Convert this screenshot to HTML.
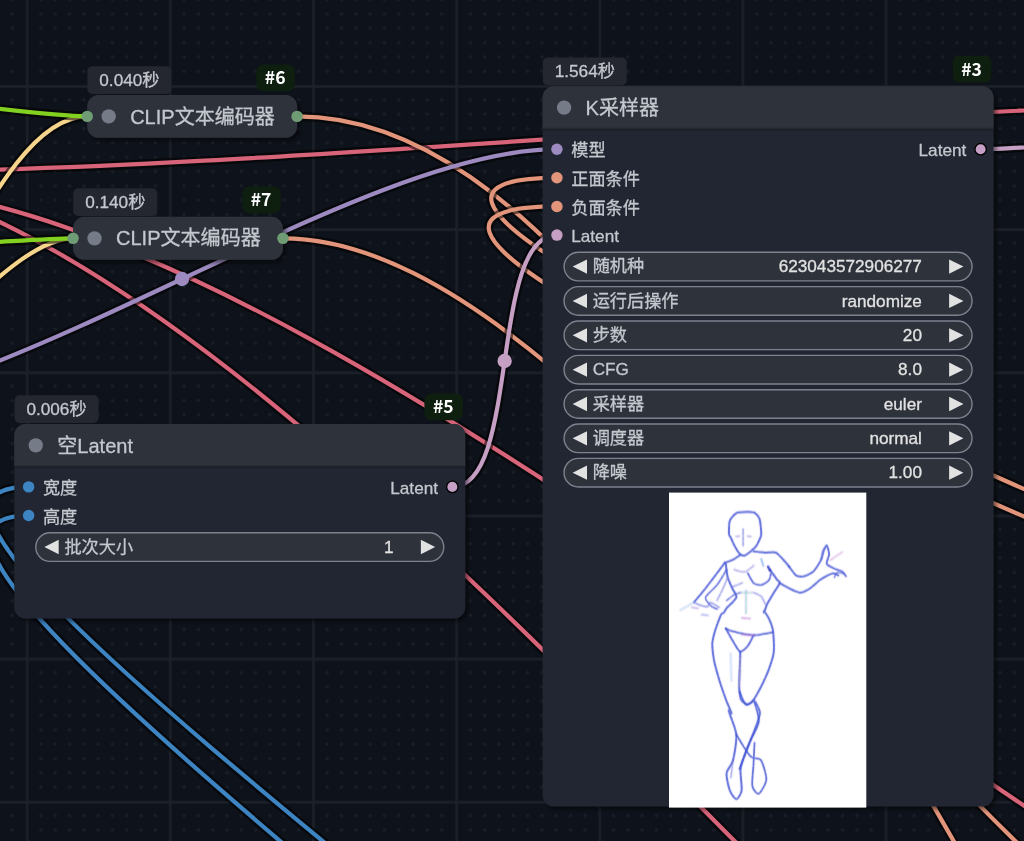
<!DOCTYPE html><html><head><meta charset="utf-8"><title>ComfyUI</title><style>html,body{margin:0;padding:0;background:#0e121a;overflow:hidden}svg{display:block;will-change:transform}text{font-family:'Liberation Sans','Noto Sans CJK SC',sans-serif;font-weight:400;paint-order:stroke;stroke-width:.3px;stroke-linejoin:round}</style></head><body>
<svg width="1024" height="841" viewBox="0 0 1024 841">
<defs>
<pattern id="grid" width="143.15" height="143.15" patternUnits="userSpaceOnUse" patternTransform="translate(25.8 85)">
<rect width="143.15" height="143.15" fill="#0e121a"/>
<circle cx="15.12" cy="14.91" r="1.7" fill="#1a1e27"/>
<circle cx="15.12" cy="29.23" r="1.7" fill="#1a1e27"/>
<circle cx="15.12" cy="43.55" r="1.7" fill="#1a1e27"/>
<circle cx="15.12" cy="57.86" r="1.7" fill="#1a1e27"/>
<circle cx="15.12" cy="72.17" r="1.7" fill="#1a1e27"/>
<circle cx="15.12" cy="86.49" r="1.7" fill="#1a1e27"/>
<circle cx="15.12" cy="100.8" r="1.7" fill="#1a1e27"/>
<circle cx="15.12" cy="115.12" r="1.7" fill="#1a1e27"/>
<circle cx="15.12" cy="129.44" r="1.7" fill="#1a1e27"/>
<circle cx="29.43" cy="14.91" r="1.7" fill="#1a1e27"/>
<circle cx="29.43" cy="29.23" r="1.7" fill="#1a1e27"/>
<circle cx="29.43" cy="43.55" r="1.7" fill="#1a1e27"/>
<circle cx="29.43" cy="57.86" r="1.7" fill="#1a1e27"/>
<circle cx="29.43" cy="72.17" r="1.7" fill="#1a1e27"/>
<circle cx="29.43" cy="86.49" r="1.7" fill="#1a1e27"/>
<circle cx="29.43" cy="100.8" r="1.7" fill="#1a1e27"/>
<circle cx="29.43" cy="115.12" r="1.7" fill="#1a1e27"/>
<circle cx="29.43" cy="129.44" r="1.7" fill="#1a1e27"/>
<circle cx="43.74" cy="14.91" r="1.7" fill="#1a1e27"/>
<circle cx="43.74" cy="29.23" r="1.7" fill="#1a1e27"/>
<circle cx="43.74" cy="43.55" r="1.7" fill="#1a1e27"/>
<circle cx="43.74" cy="57.86" r="1.7" fill="#1a1e27"/>
<circle cx="43.74" cy="72.17" r="1.7" fill="#1a1e27"/>
<circle cx="43.74" cy="86.49" r="1.7" fill="#1a1e27"/>
<circle cx="43.74" cy="100.8" r="1.7" fill="#1a1e27"/>
<circle cx="43.74" cy="115.12" r="1.7" fill="#1a1e27"/>
<circle cx="43.74" cy="129.44" r="1.7" fill="#1a1e27"/>
<circle cx="58.06" cy="14.91" r="1.7" fill="#1a1e27"/>
<circle cx="58.06" cy="29.23" r="1.7" fill="#1a1e27"/>
<circle cx="58.06" cy="43.55" r="1.7" fill="#1a1e27"/>
<circle cx="58.06" cy="57.86" r="1.7" fill="#1a1e27"/>
<circle cx="58.06" cy="72.17" r="1.7" fill="#1a1e27"/>
<circle cx="58.06" cy="86.49" r="1.7" fill="#1a1e27"/>
<circle cx="58.06" cy="100.8" r="1.7" fill="#1a1e27"/>
<circle cx="58.06" cy="115.12" r="1.7" fill="#1a1e27"/>
<circle cx="58.06" cy="129.44" r="1.7" fill="#1a1e27"/>
<circle cx="72.38" cy="14.91" r="1.7" fill="#1a1e27"/>
<circle cx="72.38" cy="29.23" r="1.7" fill="#1a1e27"/>
<circle cx="72.38" cy="43.55" r="1.7" fill="#1a1e27"/>
<circle cx="72.38" cy="57.86" r="1.7" fill="#1a1e27"/>
<circle cx="72.38" cy="72.17" r="1.7" fill="#1a1e27"/>
<circle cx="72.38" cy="86.49" r="1.7" fill="#1a1e27"/>
<circle cx="72.38" cy="100.8" r="1.7" fill="#1a1e27"/>
<circle cx="72.38" cy="115.12" r="1.7" fill="#1a1e27"/>
<circle cx="72.38" cy="129.44" r="1.7" fill="#1a1e27"/>
<circle cx="86.69" cy="14.91" r="1.7" fill="#1a1e27"/>
<circle cx="86.69" cy="29.23" r="1.7" fill="#1a1e27"/>
<circle cx="86.69" cy="43.55" r="1.7" fill="#1a1e27"/>
<circle cx="86.69" cy="57.86" r="1.7" fill="#1a1e27"/>
<circle cx="86.69" cy="72.17" r="1.7" fill="#1a1e27"/>
<circle cx="86.69" cy="86.49" r="1.7" fill="#1a1e27"/>
<circle cx="86.69" cy="100.8" r="1.7" fill="#1a1e27"/>
<circle cx="86.69" cy="115.12" r="1.7" fill="#1a1e27"/>
<circle cx="86.69" cy="129.44" r="1.7" fill="#1a1e27"/>
<circle cx="101" cy="14.91" r="1.7" fill="#1a1e27"/>
<circle cx="101" cy="29.23" r="1.7" fill="#1a1e27"/>
<circle cx="101" cy="43.55" r="1.7" fill="#1a1e27"/>
<circle cx="101" cy="57.86" r="1.7" fill="#1a1e27"/>
<circle cx="101" cy="72.17" r="1.7" fill="#1a1e27"/>
<circle cx="101" cy="86.49" r="1.7" fill="#1a1e27"/>
<circle cx="101" cy="100.8" r="1.7" fill="#1a1e27"/>
<circle cx="101" cy="115.12" r="1.7" fill="#1a1e27"/>
<circle cx="101" cy="129.44" r="1.7" fill="#1a1e27"/>
<circle cx="115.32" cy="14.91" r="1.7" fill="#1a1e27"/>
<circle cx="115.32" cy="29.23" r="1.7" fill="#1a1e27"/>
<circle cx="115.32" cy="43.55" r="1.7" fill="#1a1e27"/>
<circle cx="115.32" cy="57.86" r="1.7" fill="#1a1e27"/>
<circle cx="115.32" cy="72.17" r="1.7" fill="#1a1e27"/>
<circle cx="115.32" cy="86.49" r="1.7" fill="#1a1e27"/>
<circle cx="115.32" cy="100.8" r="1.7" fill="#1a1e27"/>
<circle cx="115.32" cy="115.12" r="1.7" fill="#1a1e27"/>
<circle cx="115.32" cy="129.44" r="1.7" fill="#1a1e27"/>
<circle cx="129.64" cy="14.91" r="1.7" fill="#1a1e27"/>
<circle cx="129.64" cy="29.23" r="1.7" fill="#1a1e27"/>
<circle cx="129.64" cy="43.55" r="1.7" fill="#1a1e27"/>
<circle cx="129.64" cy="57.86" r="1.7" fill="#1a1e27"/>
<circle cx="129.64" cy="72.17" r="1.7" fill="#1a1e27"/>
<circle cx="129.64" cy="86.49" r="1.7" fill="#1a1e27"/>
<circle cx="129.64" cy="100.8" r="1.7" fill="#1a1e27"/>
<circle cx="129.64" cy="115.12" r="1.7" fill="#1a1e27"/>
<circle cx="129.64" cy="129.44" r="1.7" fill="#1a1e27"/>
<rect x="0.2" y="0" width="2.4" height="143.15" fill="#1c2029"/><rect x="0" y="0.2" width="143.15" height="2.6" fill="#1c2029"/>
</pattern>
<filter id="sh" x="-10%" y="-10%" width="120%" height="125%"><feDropShadow dx="2.9" dy="2.9" stdDeviation="2.2" flood-color="#000" flood-opacity="0.5"/></filter>
<filter id="blur"><feGaussianBlur stdDeviation="0.75"/></filter>
</defs>
<rect width="1024" height="841" fill="url(#grid)"/>
<path d="M-97.5 171.1C235.89 171.1 901.01 104.7 1234.4 104.7" fill="none" stroke="rgba(0,0,0,0.55)" stroke-width="9.16"/>
<path d="M-97.5 171.1C235.89 171.1 901.01 104.7 1234.4 104.7" fill="none" stroke="#d8647a" stroke-width="4.22"/>
<path d="M-158.1 184.3C399.32 184.3 1281.38 1176.2 1838.8 1176.2" fill="none" stroke="rgba(0,0,0,0.55)" stroke-width="9.16"/>
<path d="M-158.1 184.3C399.32 184.3 1281.38 1176.2 1838.8 1176.2" fill="none" stroke="#d8647a" stroke-width="4.22"/>
<path d="M-234.2 160.8C352.22 160.8 1101.38 1505.5 1687.8 1505.5" fill="none" stroke="rgba(0,0,0,0.55)" stroke-width="9.16"/>
<path d="M-234.2 160.8C352.22 160.8 1101.38 1505.5 1687.8 1505.5" fill="none" stroke="#d8647a" stroke-width="4.22"/>
<path d="M751 1306C1024.04 1306 -244.42 486.89 28.62 486.89" fill="none" stroke="rgba(0,0,0,0.55)" stroke-width="9.16"/>
<path d="M751 1306C1024.04 1306 -244.42 486.89 28.62 486.89" fill="none" stroke="#3d84c2" stroke-width="4.22"/>
<path d="M723.7 1329.8C991.35 1329.8 -239.04 515.52 28.62 515.52" fill="none" stroke="rgba(0,0,0,0.55)" stroke-width="9.16"/>
<path d="M723.7 1329.8C991.35 1329.8 -239.04 515.52 28.62 515.52" fill="none" stroke="#3d84c2" stroke-width="4.22"/>
<path d="M-184.6 421.1C-82.52 421.1 -14.88 116.38 87.2 116.38" fill="none" stroke="rgba(0,0,0,0.55)" stroke-width="9.16"/>
<path d="M-184.6 421.1C-82.52 421.1 -14.88 116.38 87.2 116.38" fill="none" stroke="#f5d48b" stroke-width="4.22"/>
<path d="M-101.7 99.9C-54.3 99.9 39.8 116.38 87.2 116.38" fill="none" stroke="rgba(0,0,0,0.55)" stroke-width="9.16"/>
<path d="M-101.7 99.9C-54.3 99.9 39.8 116.38 87.2 116.38" fill="none" stroke="#82d01f" stroke-width="4.22"/>
<path d="M-142.9 374.7C-79.05 374.7 9.2 238.33 73.05 238.33" fill="none" stroke="rgba(0,0,0,0.55)" stroke-width="9.16"/>
<path d="M-142.9 374.7C-79.05 374.7 9.2 238.33 73.05 238.33" fill="none" stroke="#f5d48b" stroke-width="4.22"/>
<path d="M-50.4 244.1C-19.5 244.1 42.15 238.33 73.05 238.33" fill="none" stroke="rgba(0,0,0,0.55)" stroke-width="9.16"/>
<path d="M-50.4 244.1C-19.5 244.1 42.15 238.33 73.05 238.33" fill="none" stroke="#82d01f" stroke-width="4.22"/>
<path d="M297.1 116.38C775.51 116.38 1110.29 1528.4 1588.7 1528.4" fill="none" stroke="rgba(0,0,0,0.55)" stroke-width="9.16"/>
<path d="M297.1 116.38C775.51 116.38 1110.29 1528.4 1588.7 1528.4" fill="none" stroke="#e2957a" stroke-width="4.22"/>
<path d="M282.95 238.33C624.42 238.33 1036.03 1055.4 1377.5 1055.4" fill="none" stroke="rgba(0,0,0,0.55)" stroke-width="9.16"/>
<path d="M282.95 238.33C624.42 238.33 1036.03 1055.4 1377.5 1055.4" fill="none" stroke="#e2957a" stroke-width="4.22"/>
<path d="M-192.92 408.81C5.46 408.81 358.54 149.19 556.92 149.19" fill="none" stroke="rgba(0,0,0,0.55)" stroke-width="9.16"/>
<path d="M-192.92 408.81C5.46 408.81 358.54 149.19 556.92 149.19" fill="none" stroke="#9c8ac0" stroke-width="4.22"/>
<circle cx="182" cy="279" r="7.16" fill="#9c8ac0"/>
<path d="M2446.3 1211.6C2984.73 1211.6 18.49 177.82 556.92 177.82" fill="none" stroke="rgba(0,0,0,0.55)" stroke-width="9.16"/>
<path d="M2446.3 1211.6C2984.73 1211.6 18.49 177.82 556.92 177.82" fill="none" stroke="#e2957a" stroke-width="4.22"/>
<path d="M2532 1267.8C3092.55 1267.8 -3.63 206.45 556.92 206.45" fill="none" stroke="rgba(0,0,0,0.55)" stroke-width="9.16"/>
<path d="M2532 1267.8C3092.55 1267.8 -3.63 206.45 556.92 206.45" fill="none" stroke="#e2957a" stroke-width="4.22"/>
<path d="M452.34 486.89C520.5 486.89 488.75 235.08 556.92 235.08" fill="none" stroke="rgba(0,0,0,0.55)" stroke-width="9.16"/>
<path d="M452.34 486.89C520.5 486.89 488.75 235.08 556.92 235.08" fill="none" stroke="#c69fc4" stroke-width="4.22"/>
<circle cx="504.63" cy="360.99" r="7.16" fill="#c69fc4"/>
<path d="M980.64 149.19C1048.15 149.19 1182.49 130 1250 130" fill="none" stroke="rgba(0,0,0,0.55)" stroke-width="9.16"/>
<path d="M980.64 149.19C1048.15 149.19 1182.49 130 1250 130" fill="none" stroke="#c69fc4" stroke-width="4.22"/>
<g filter="url(#sh)">
<path d="M98.65 94.91H285.65A11.45 11.45 0 0 1 297.1 106.36V126.4A11.45 11.45 0 0 1 285.65 137.85H98.65A11.45 11.45 0 0 1 87.2 126.4V106.36A11.45 11.45 0 0 1 98.65 94.91Z" fill="#2e323b"/>
</g>
<circle cx="108.67" cy="116.38" r="7.16" fill="#757b87"/>
<text x="130.15" y="123.53" font-size="20.04" fill="#c4c8ce" stroke="#c4c8ce">CLIP文本编码器</text>
<circle cx="87.2" cy="116.38" r="5.73" fill="#6f9c75"/>
<circle cx="297.1" cy="116.38" r="5.73" fill="#6f9c75"/>
<path d="M92.4 66.28H166.4A5 5 0 0 1 171.4 71.28V89.01A5 5 0 0 1 166.4 94.01H92.4A5 5 0 0 1 87.4 89.01V71.28A5 5 0 0 1 92.4 66.28Z" fill="#242730"/>
<text x="129.4" y="86.08" font-size="17.18" fill="#c4c8ce" stroke="#c4c8ce" text-anchor="middle">0.040秒</text>
<path d="M263.3 64.5H287.9A7 7 0 0 1 294.9 71.5V84.3A7 7 0 0 1 287.9 91.3H263.3A7 7 0 0 1 256.3 84.3V71.5A7 7 0 0 1 263.3 64.5Z" fill="#0f1f0f"/>
<text x="275.2" y="84.3" font-size="17.6" fill="#fff" text-anchor="middle" style="font-weight:700;font-family:'Noto Sans CJK SC','Liberation Sans',sans-serif">#6</text>
<g filter="url(#sh)">
<path d="M84.5 216.86H271.5A11.45 11.45 0 0 1 282.95 228.31V248.35A11.45 11.45 0 0 1 271.5 259.8H84.5A11.45 11.45 0 0 1 73.05 248.35V228.31A11.45 11.45 0 0 1 84.5 216.86Z" fill="#2e323b"/>
</g>
<circle cx="94.52" cy="238.33" r="7.16" fill="#757b87"/>
<text x="116" y="245.49" font-size="20.04" fill="#c4c8ce" stroke="#c4c8ce">CLIP文本编码器</text>
<circle cx="73.05" cy="238.33" r="5.73" fill="#6f9c75"/>
<circle cx="282.95" cy="238.33" r="5.73" fill="#6f9c75"/>
<path d="M78.25 188.23H152.25A5 5 0 0 1 157.25 193.23V210.96A5 5 0 0 1 152.25 215.96H78.25A5 5 0 0 1 73.25 210.96V193.23A5 5 0 0 1 78.25 188.23Z" fill="#242730"/>
<text x="115.25" y="208.03" font-size="17.18" fill="#c4c8ce" stroke="#c4c8ce" text-anchor="middle">0.140秒</text>
<path d="M249.15 186.46H273.75A7 7 0 0 1 280.75 193.46V206.26A7 7 0 0 1 273.75 213.26H249.15A7 7 0 0 1 242.15 206.26V193.46A7 7 0 0 1 249.15 186.46Z" fill="#0f1f0f"/>
<text x="261.05" y="206.26" font-size="17.6" fill="#fff" text-anchor="middle" style="font-weight:700;font-family:'Noto Sans CJK SC','Liberation Sans',sans-serif">#7</text>
<g filter="url(#sh)">
<path d="M25.75 423.91H453.77A11.45 11.45 0 0 1 465.22 435.36V607.14A11.45 11.45 0 0 1 453.77 618.59H25.75A11.45 11.45 0 0 1 14.3 607.14V435.36A11.45 11.45 0 0 1 25.75 423.91Z" fill="#242730"/>
</g>
<path d="M25.75 423.91H453.77A11.45 11.45 0 0 1 465.22 435.36V466.85H14.3V435.36A11.45 11.45 0 0 1 25.75 423.91Z" fill="#2e323b"/>
<rect x="14.3" y="465.42" width="450.92" height="2.86" fill="rgba(0,0,0,0.2)"/>
<circle cx="35.77" cy="445.38" r="7.16" fill="#757b87"/>
<text x="57.25" y="452.54" font-size="20.04" fill="#c4c8ce" stroke="#c4c8ce">空Latent</text>
<path d="M19.5 395.28H93.5A5 5 0 0 1 98.5 400.28V418.01A5 5 0 0 1 93.5 423.01H19.5A5 5 0 0 1 14.5 418.01V400.28A5 5 0 0 1 19.5 395.28Z" fill="#242730"/>
<text x="56.5" y="415.08" font-size="17.18" fill="#c4c8ce" stroke="#c4c8ce" text-anchor="middle">0.006秒</text>
<path d="M431.42 393.51H456.02A7 7 0 0 1 463.02 400.51V413.31A7 7 0 0 1 456.02 420.31H431.42A7 7 0 0 1 424.42 413.31V400.51A7 7 0 0 1 431.42 393.51Z" fill="#0f1f0f"/>
<text x="443.32" y="413.31" font-size="17.6" fill="#fff" text-anchor="middle" style="font-weight:700;font-family:'Noto Sans CJK SC','Liberation Sans',sans-serif">#5</text>
<circle cx="28.62" cy="486.89" r="5.73" fill="#3d84c2"/>
<text x="42.93" y="494.05" font-size="17.18" fill="#c4c8ce" stroke="#c4c8ce">宽度</text>
<circle cx="28.62" cy="515.52" r="5.73" fill="#3d84c2"/>
<text x="42.93" y="522.68" font-size="17.18" fill="#c4c8ce" stroke="#c4c8ce">高度</text>
<circle cx="452.34" cy="486.89" r="5.73" fill="#c69fc4" stroke="#000" stroke-width="1.4"/>
<text x="438.02" y="494.05" font-size="17.18" fill="#c4c8ce" stroke="#c4c8ce" text-anchor="end">Latent</text>
<rect x="35.77" y="532.7" width="407.98" height="28.63" rx="14.31" fill="#2e323b" stroke="#7c838e" stroke-width="1.4"/>
<path d="M58.68 539.86L44.36 547.01L58.68 554.17Z" fill="#e2e2e2"/>
<path d="M420.85 539.86L435.16 547.01L420.85 554.17Z" fill="#e2e2e2"/>
<text x="64.4" y="552.74" font-size="17.18" fill="#c4c8ce" stroke="#c4c8ce">批次大小</text>
<text x="393.65" y="552.74" font-size="17.18" fill="#e2e2e2" stroke="#e2e2e2" text-anchor="end">1</text>
<g filter="url(#sh)">
<path d="M554.05 86.21H982.07A11.45 11.45 0 0 1 993.52 97.66V795.1A11.45 11.45 0 0 1 982.07 806.55H554.05A11.45 11.45 0 0 1 542.6 795.1V97.66A11.45 11.45 0 0 1 554.05 86.21Z" fill="#242730"/>
</g>
<path d="M554.05 86.21H982.07A11.45 11.45 0 0 1 993.52 97.66V129.15H542.6V97.66A11.45 11.45 0 0 1 554.05 86.21Z" fill="#2e323b"/>
<rect x="542.6" y="127.72" width="450.92" height="2.86" fill="rgba(0,0,0,0.2)"/>
<circle cx="564.07" cy="107.68" r="7.16" fill="#757b87"/>
<text x="585.55" y="114.84" font-size="20.04" fill="#c4c8ce" stroke="#c4c8ce">K采样器</text>
<path d="M547.8 57.58H621.8A5 5 0 0 1 626.8 62.58V80.31A5 5 0 0 1 621.8 85.31H547.8A5 5 0 0 1 542.8 80.31V62.58A5 5 0 0 1 547.8 57.58Z" fill="#242730"/>
<text x="584.8" y="77.38" font-size="17.18" fill="#c4c8ce" stroke="#c4c8ce" text-anchor="middle">1.564秒</text>
<path d="M959.72 55.81H984.32A7 7 0 0 1 991.32 62.81V75.61A7 7 0 0 1 984.32 82.61H959.72A7 7 0 0 1 952.72 75.61V62.81A7 7 0 0 1 959.72 55.81Z" fill="#0f1f0f"/>
<text x="971.62" y="75.61" font-size="17.6" fill="#fff" text-anchor="middle" style="font-weight:700;font-family:'Noto Sans CJK SC','Liberation Sans',sans-serif">#3</text>
<circle cx="556.92" cy="149.19" r="5.73" fill="#9c8ac0"/>
<text x="571.23" y="156.35" font-size="17.18" fill="#c4c8ce" stroke="#c4c8ce">模型</text>
<circle cx="556.92" cy="177.82" r="5.73" fill="#e2957a"/>
<text x="571.23" y="184.98" font-size="17.18" fill="#c4c8ce" stroke="#c4c8ce">正面条件</text>
<circle cx="556.92" cy="206.45" r="5.73" fill="#e2957a"/>
<text x="571.23" y="213.61" font-size="17.18" fill="#c4c8ce" stroke="#c4c8ce">负面条件</text>
<circle cx="556.92" cy="235.08" r="5.73" fill="#c69fc4"/>
<text x="571.23" y="242.24" font-size="17.18" fill="#c4c8ce" stroke="#c4c8ce">Latent</text>
<circle cx="980.64" cy="149.19" r="5.73" fill="#c69fc4" stroke="#000" stroke-width="1.4"/>
<text x="966.32" y="156.35" font-size="17.18" fill="#c4c8ce" stroke="#c4c8ce" text-anchor="end">Latent</text>
<rect x="564.07" y="252.26" width="407.98" height="28.63" rx="14.31" fill="#2e323b" stroke="#7c838e" stroke-width="1.4"/>
<path d="M586.98 259.42L572.66 266.57L586.98 273.73Z" fill="#e2e2e2"/>
<path d="M949.15 259.42L963.46 266.57L949.15 273.73Z" fill="#e2e2e2"/>
<text x="592.7" y="272.3" font-size="17.18" fill="#c4c8ce" stroke="#c4c8ce">随机种</text>
<text x="921.95" y="272.3" font-size="17.18" fill="#e2e2e2" stroke="#e2e2e2" text-anchor="end">623043572906277</text>
<rect x="564.07" y="286.62" width="407.98" height="28.63" rx="14.31" fill="#2e323b" stroke="#7c838e" stroke-width="1.4"/>
<path d="M586.98 293.77L572.66 300.93L586.98 308.09Z" fill="#e2e2e2"/>
<path d="M949.15 293.77L963.46 300.93L949.15 308.09Z" fill="#e2e2e2"/>
<text x="592.7" y="306.66" font-size="17.18" fill="#c4c8ce" stroke="#c4c8ce">运行后操作</text>
<text x="921.95" y="306.66" font-size="17.18" fill="#e2e2e2" stroke="#e2e2e2" text-anchor="end">randomize</text>
<rect x="564.07" y="320.97" width="407.98" height="28.63" rx="14.31" fill="#2e323b" stroke="#7c838e" stroke-width="1.4"/>
<path d="M586.98 328.13L572.66 335.29L586.98 342.44Z" fill="#e2e2e2"/>
<path d="M949.15 328.13L963.46 335.29L949.15 342.44Z" fill="#e2e2e2"/>
<text x="592.7" y="341.01" font-size="17.18" fill="#c4c8ce" stroke="#c4c8ce">步数</text>
<text x="921.95" y="341.01" font-size="17.18" fill="#e2e2e2" stroke="#e2e2e2" text-anchor="end">20</text>
<rect x="564.07" y="355.33" width="407.98" height="28.63" rx="14.31" fill="#2e323b" stroke="#7c838e" stroke-width="1.4"/>
<path d="M586.98 362.48L572.66 369.64L586.98 376.8Z" fill="#e2e2e2"/>
<path d="M949.15 362.48L963.46 369.64L949.15 376.8Z" fill="#e2e2e2"/>
<text x="592.7" y="375.37" font-size="17.18" fill="#c4c8ce" stroke="#c4c8ce">CFG</text>
<text x="921.95" y="375.37" font-size="17.18" fill="#e2e2e2" stroke="#e2e2e2" text-anchor="end">8.0</text>
<rect x="564.07" y="389.68" width="407.98" height="28.63" rx="14.31" fill="#2e323b" stroke="#7c838e" stroke-width="1.4"/>
<path d="M586.98 396.84L572.66 404L586.98 411.16Z" fill="#e2e2e2"/>
<path d="M949.15 396.84L963.46 404L949.15 411.16Z" fill="#e2e2e2"/>
<text x="592.7" y="409.72" font-size="17.18" fill="#c4c8ce" stroke="#c4c8ce">采样器</text>
<text x="921.95" y="409.72" font-size="17.18" fill="#e2e2e2" stroke="#e2e2e2" text-anchor="end">euler</text>
<rect x="564.07" y="424.04" width="407.98" height="28.63" rx="14.31" fill="#2e323b" stroke="#7c838e" stroke-width="1.4"/>
<path d="M586.98 431.2L572.66 438.35L586.98 445.51Z" fill="#e2e2e2"/>
<path d="M949.15 431.2L963.46 438.35L949.15 445.51Z" fill="#e2e2e2"/>
<text x="592.7" y="444.08" font-size="17.18" fill="#c4c8ce" stroke="#c4c8ce">调度器</text>
<text x="921.95" y="444.08" font-size="17.18" fill="#e2e2e2" stroke="#e2e2e2" text-anchor="end">normal</text>
<rect x="564.07" y="458.39" width="407.98" height="28.63" rx="14.31" fill="#2e323b" stroke="#7c838e" stroke-width="1.4"/>
<path d="M586.98 465.55L572.66 472.71L586.98 479.87Z" fill="#e2e2e2"/>
<path d="M949.15 465.55L963.46 472.71L949.15 479.87Z" fill="#e2e2e2"/>
<text x="592.7" y="478.44" font-size="17.18" fill="#c4c8ce" stroke="#c4c8ce">降噪</text>
<text x="921.95" y="478.44" font-size="17.18" fill="#e2e2e2" stroke="#e2e2e2" text-anchor="end">1.00</text>
<rect x="669" y="492.6" width="197.3" height="315" fill="#fff"/>
<g transform="translate(669.0 492.6)" fill="none" stroke-linecap="round" stroke-linejoin="round" filter="url(#blur)">
<path d="M69.3 19.8C71.8 19.4 82.0 19.0 84.6 19.8C87.3 20.6 89.5 23.9 90.4 26.0C91.3 28.1 91.8 34.4 92.0 36.6C92.2 38.7 92.5 41.2 92.0 43.3C91.4 45.3 88.8 51.0 87.5 52.9C86.3 54.8 83.3 57.4 81.8 58.7C80.2 60.0 76.5 62.9 75.0 63.1C73.6 63.3 71.4 61.9 70.2 60.6C69.0 59.3 66.4 54.8 65.4 52.9C64.4 51.0 62.6 46.7 61.9 45.2C61.3 43.8 60.2 43.4 60.0 41.4C59.9 39.3 60.0 31.1 60.6 28.9C61.2 26.6 63.4 24.2 64.4 23.1C65.5 22.0 66.7 20.2 69.3 19.8Z" stroke="#b9a8f0" stroke-width="4.1" opacity="0.2"/>
<path d="M74.1 36.6 74.1 52.9" stroke="#b9a8f0" stroke-width="3.5" opacity="0.2"/>
<path d="M67.3 43.9 70.2 43.5" stroke="#b9a8f0" stroke-width="3.4" opacity="0.2"/>
<path d="M78.9 43.5 81.8 43.9" stroke="#b9a8f0" stroke-width="3.4" opacity="0.2"/>
<path d="M84.6 58.7C86.1 58.8 93.4 59.9 96.2 60.0C99.0 60.2 104.4 59.0 106.8 60.0C109.2 61.1 113.7 66.5 115.4 68.3C117.1 70.1 119.6 73.3 120.2 74.1" stroke="#b9a8f0" stroke-width="4.0" opacity="0.2"/>
<path d="M71.2 62.5C70.2 63.1 65.4 66.4 63.5 67.3C61.6 68.3 56.8 69.9 55.8 70.2" stroke="#b9a8f0" stroke-width="3.9" opacity="0.2"/>
<path d="M55.8 70.2C54.3 72.1 46.9 82.1 44.2 85.6C41.6 89.1 37.0 95.1 34.6 98.1C32.2 101.1 26.2 108.2 25.0 109.7" stroke="#b9a8f0" stroke-width="3.9" opacity="0.2"/>
<path d="M57.7 77.0C56.5 78.9 50.7 88.9 48.1 92.3C45.5 95.8 37.3 102.2 36.6 104.8C35.8 107.5 40.9 112.1 42.3 113.5C43.8 114.9 47.4 116.0 48.1 116.4" stroke="#b9a8f0" stroke-width="3.7" opacity="0.2"/>
<path d="M25.0 109.7C25.7 110.0 29.1 112.0 30.8 112.5C32.5 113.1 37.2 114.2 38.5 113.9C39.8 113.6 39.9 109.8 41.4 109.9C42.8 110.0 48.9 114.1 50.0 114.7" stroke="#b9a8f0" stroke-width="3.6" opacity="0.2"/>
<path d="M23.1 114.7 28.9 115.7" stroke="#b9a8f0" stroke-width="3.4" opacity="0.2"/>
<path d="M32.7 122.0 39.4 122.8" stroke="#b9a8f0" stroke-width="3.4" opacity="0.2"/>
<path d="M11.5 117.4 25.0 109.7" stroke="#b9a8f0" stroke-width="3.4" opacity="0.2"/>
<path d="M56.8 71.2C57.0 72.9 57.8 81.5 58.7 84.6C59.5 87.8 62.4 93.7 63.5 96.2C64.6 98.7 68.1 102.4 67.3 104.8C66.6 107.3 59.3 113.5 57.7 115.4C56.2 117.3 55.6 119.2 54.8 120.0C54.1 120.9 53.0 120.2 51.9 122.4C50.9 124.6 47.3 134.2 46.2 137.8C45.1 141.4 43.4 147.4 43.3 151.2C43.2 155.1 44.2 163.8 45.2 168.6C46.2 173.4 49.4 184.7 51.0 189.7C52.5 194.8 56.3 205.1 57.7 209.0C59.2 212.8 62.3 219.3 62.5 220.5C62.8 221.7 59.2 215.6 59.8 218.3C60.3 221.0 66.7 235.8 67.3 241.9C67.8 248.1 65.3 262.9 64.0 267.7C62.8 272.5 58.0 276.8 57.6 280.6C57.2 284.4 59.6 294.6 60.8 297.8C62.0 301.0 65.8 306.4 67.3 306.4C68.7 306.4 72.1 301.6 72.6 297.8C73.2 294.0 71.0 281.1 71.6 276.3C72.1 271.5 75.2 264.0 76.9 259.1C78.7 254.3 83.8 242.5 85.5 237.6C87.3 232.8 90.8 223.9 90.9 220.4C91.0 217.0 87.1 211.0 86.6 209.7" stroke="#b9a8f0" stroke-width="4.0" opacity="0.2"/>
<path d="M57.7 107.7C58.7 107.0 63.7 102.9 65.4 102.0C67.1 101.0 70.5 100.3 71.2 100.0" stroke="#b9a8f0" stroke-width="3.6" opacity="0.2"/>
<path d="M58.7 84.6C58.1 86.1 55.2 93.3 53.9 96.2C52.5 99.1 48.8 106.3 48.1 107.7" stroke="#b9a8f0" stroke-width="3.5" opacity="0.2"/>
<path d="M101.0 77.0C101.8 78.2 106.5 84.9 107.7 86.6C108.9 88.3 111.0 88.7 110.6 90.4C110.3 92.1 106.4 97.4 104.8 100.0C103.3 102.7 99.3 109.1 98.1 111.6C96.9 114.1 95.6 119.2 95.2 120.0C94.9 120.9 94.6 117.8 95.2 118.5C95.8 119.3 99.0 123.8 100.0 126.2C101.1 128.6 103.3 133.7 103.9 137.8C104.5 141.9 105.3 154.1 104.8 158.9C104.4 163.8 101.6 171.9 100.0 176.3C98.5 180.6 94.3 189.7 92.3 193.6C90.4 197.4 86.3 204.8 84.6 207.0C83.0 209.3 80.4 211.8 78.9 211.8C77.3 211.8 73.2 209.3 72.1 207.0C71.1 204.8 70.3 198.9 70.2 193.6C70.1 188.3 71.1 169.0 71.2 164.7C71.3 160.4 71.2 159.7 71.2 158.9" stroke="#b9a8f0" stroke-width="4.0" opacity="0.2"/>
<path d="M120.2 74.1C121.1 75.1 125.2 81.5 127.0 82.7C128.8 83.9 132.5 84.2 134.7 83.7C136.8 83.2 142.1 80.9 144.3 78.9C146.5 76.8 150.7 70.0 152.0 67.3C153.3 64.7 154.1 59.5 154.9 57.7C155.6 55.9 157.1 52.4 157.8 52.9C158.4 53.4 160.1 59.3 160.1 61.6C160.1 63.8 157.1 69.4 157.8 71.2C158.4 73.0 163.5 75.0 165.4 76.0C167.4 77.0 171.7 77.9 173.1 78.9C174.6 79.8 176.5 83.1 177.0 83.7" stroke="#b9a8f0" stroke-width="3.9" opacity="0.2"/>
<path d="M110.6 90.4C111.7 91.0 116.8 94.0 119.3 95.2C121.8 96.4 128.2 99.9 130.8 100.0C133.5 100.2 137.8 97.9 140.4 96.2C143.1 94.5 149.1 88.5 152.0 86.6C154.9 84.6 161.4 81.3 163.5 80.8C165.7 80.3 168.6 82.5 169.3 82.7" stroke="#b9a8f0" stroke-width="3.9" opacity="0.2"/>
<path d="M152.0 67.3C152.2 66.1 153.3 59.3 153.9 57.7C154.5 56.2 156.4 55.2 156.8 54.8" stroke="#b9a8f0" stroke-width="3.6" opacity="0.2"/>
<path d="M161.6 67.3 173.1 59.6" stroke="#b9a8f0" stroke-width="3.4" opacity="0.2"/>
<path d="M165.4 84.6C165.8 84.0 167.3 80.3 168.3 79.8C169.4 79.4 173.4 80.7 174.1 80.8" stroke="#b9a8f0" stroke-width="3.5" opacity="0.2"/>
<path d="M78.9 80.8C79.6 82.0 83.0 89.0 84.6 90.4C86.3 91.9 90.4 92.7 92.3 92.3C94.3 92.0 98.8 89.0 100.0 87.5C101.2 86.1 101.7 81.6 102.0 80.8" stroke="#b9a8f0" stroke-width="3.8" opacity="0.2"/>
<path d="M65.4 77.0C66.1 77.2 69.7 78.6 71.2 78.9C72.6 79.1 75.3 79.6 77.0 78.9C78.6 78.2 83.7 73.8 84.6 73.1" stroke="#b9a8f0" stroke-width="3.5" opacity="0.2"/>
<path d="M63.5 94.3 73.1 90.4" stroke="#b9a8f0" stroke-width="3.5" opacity="0.2"/>
<path d="M92.3 66.4 94.3 73.1" stroke="#b9a8f0" stroke-width="3.7" opacity="0.2"/>
<path d="M99.1 74.1 101.0 77.9" stroke="#b9a8f0" stroke-width="4.4" opacity="0.2"/>
<path d="M84.6 100.0C85.6 100.5 90.9 102.4 92.3 103.9C93.8 105.3 95.7 110.6 96.2 111.6" stroke="#b9a8f0" stroke-width="3.5" opacity="0.2"/>
<path d="M77.0 98.1C77.0 100.9 77.0 117.7 77.0 120.0C77.0 122.4 77.0 117.0 77.0 116.6" stroke="#b9a8f0" stroke-width="3.5" opacity="0.2"/>
<path d="M72.1 100.0 82.7 100.0" stroke="#b9a8f0" stroke-width="3.4" opacity="0.2"/>
<path d="M73.1 125.3 80.8 125.9" stroke="#b9a8f0" stroke-width="3.6" opacity="0.2"/>
<path d="M56.8 135.9C57.6 136.2 60.0 137.9 63.5 138.7C67.0 139.6 79.6 142.5 84.6 142.6C89.7 142.7 101.5 140.1 103.9 139.7" stroke="#b9a8f0" stroke-width="3.8" opacity="0.2"/>
<path d="M56.8 135.9C57.7 137.5 62.6 146.4 64.4 149.3C66.3 152.2 69.4 158.5 71.2 158.9C73.0 159.4 77.2 155.2 78.9 153.2C80.6 151.1 83.9 143.9 84.6 142.6" stroke="#b9a8f0" stroke-width="3.9" opacity="0.2"/>
<path d="M73.1 142.0 84.6 142.8" stroke="#b9a8f0" stroke-width="3.6" opacity="0.2"/>
<path d="M71.2 164.7 70.2 193.6" stroke="#b9a8f0" stroke-width="3.4" opacity="0.2"/>
<path d="M61.6 160.9 62.5 187.8" stroke="#b9a8f0" stroke-width="3.4" opacity="0.2"/>
<path d="M85.5 209.7C86.1 212.1 90.4 224.2 89.8 229.0C89.3 233.9 83.2 243.5 81.2 248.4C79.2 253.2 75.1 264.2 73.7 267.7C72.4 271.2 70.9 275.2 70.5 276.3" stroke="#b9a8f0" stroke-width="3.8" opacity="0.2"/>
<path d="M67.3 241.9C69.0 244.6 78.1 260.2 81.2 263.4C84.3 266.6 90.0 264.8 92.0 267.7C94.0 270.7 97.6 282.9 97.3 287.0C97.1 291.2 91.6 300.2 89.8 301.0C88.1 301.8 84.1 297.1 83.4 293.5C82.7 289.9 84.2 277.4 84.5 272.0C84.7 266.6 85.4 253.2 85.5 250.5" stroke="#b9a8f0" stroke-width="3.8" opacity="0.2"/>
<path d="M85.5 207.6C84.5 208.1 78.8 212.9 76.9 211.9C75.1 210.8 71.3 200.6 70.5 199.0" stroke="#b9a8f0" stroke-width="3.8" opacity="0.2"/>
<path d="M64.0 267.7 61.9 284.9" stroke="#b9a8f0" stroke-width="3.5" opacity="0.2"/>
<path d="M69.3 19.8C71.8 19.4 82.0 19.0 84.6 19.8C87.3 20.6 89.5 23.9 90.4 26.0C91.3 28.1 91.8 34.4 92.0 36.6C92.2 38.7 92.5 41.2 92.0 43.3C91.4 45.3 88.8 51.0 87.5 52.9C86.3 54.8 83.3 57.4 81.8 58.7C80.2 60.0 76.5 62.9 75.0 63.1C73.6 63.3 71.4 61.9 70.2 60.6C69.0 59.3 66.4 54.8 65.4 52.9C64.4 51.0 62.6 46.7 61.9 45.2C61.3 43.8 60.2 43.4 60.0 41.4C59.9 39.3 60.0 31.1 60.6 28.9C61.2 26.6 63.4 24.2 64.4 23.1C65.5 22.0 66.7 20.2 69.3 19.8Z" stroke="#4358d4" stroke-width="2.0" opacity="0.77" stroke-dasharray="4 1.1 8 1.5 2.5 1"/>
<path d="M74.1 36.6 74.1 52.9" stroke="#7d8be0" stroke-width="1.5" opacity="0.60" stroke-dasharray="6 1.4 3.5 1 5 1.2"/>
<path d="M67.3 43.9 70.2 43.5" stroke="#9a8fe0" stroke-width="1.4" opacity="0.52" stroke-dasharray="5 1.3 3 0.9 7 1.4"/>
<path d="M78.9 43.5 81.8 43.9" stroke="#9a8fe0" stroke-width="1.4" opacity="0.52" stroke-dasharray="4 1.1 8 1.5 2.5 1"/>
<path d="M84.6 58.7C86.1 58.8 93.4 59.9 96.2 60.0C99.0 60.2 104.4 59.0 106.8 60.0C109.2 61.1 113.7 66.5 115.4 68.3C117.1 70.1 119.6 73.3 120.2 74.1" stroke="#4358d4" stroke-width="2.0" opacity="0.77" stroke-dasharray="6 1.4 3.5 1 5 1.2"/>
<path d="M71.2 62.5C70.2 63.1 65.4 66.4 63.5 67.3C61.6 68.3 56.8 69.9 55.8 70.2" stroke="#4358d4" stroke-width="1.9" opacity="0.77" stroke-dasharray="5 1.3 3 0.9 7 1.4"/>
<path d="M55.8 70.2C54.3 72.1 46.9 82.1 44.2 85.6C41.6 89.1 37.0 95.1 34.6 98.1C32.2 101.1 26.2 108.2 25.0 109.7" stroke="#4358d4" stroke-width="1.9" opacity="0.77" stroke-dasharray="4 1.1 8 1.5 2.5 1"/>
<path d="M57.7 77.0C56.5 78.9 50.7 88.9 48.1 92.3C45.5 95.8 37.3 102.2 36.6 104.8C35.8 107.5 40.9 112.1 42.3 113.5C43.8 114.9 47.4 116.0 48.1 116.4" stroke="#4358d4" stroke-width="1.6" opacity="0.69" stroke-dasharray="6 1.4 3.5 1 5 1.2"/>
<path d="M25.0 109.7C25.7 110.0 29.1 112.0 30.8 112.5C32.5 113.1 37.2 114.2 38.5 113.9C39.8 113.6 39.9 109.8 41.4 109.9C42.8 110.0 48.9 114.1 50.0 114.7" stroke="#6f7ee0" stroke-width="1.5" opacity="0.60" stroke-dasharray="5 1.3 3 0.9 7 1.4"/>
<path d="M23.1 114.7 28.9 115.7" stroke="#b08fe0" stroke-width="1.4" opacity="0.52" stroke-dasharray="4 1.1 8 1.5 2.5 1"/>
<path d="M32.7 122.0 39.4 122.8" stroke="#8f9fe8" stroke-width="1.4" opacity="0.52" stroke-dasharray="6 1.4 3.5 1 5 1.2"/>
<path d="M11.5 117.4 25.0 109.7" stroke="#9fe0e8" stroke-width="1.4" opacity="0.43" stroke-dasharray="5 1.3 3 0.9 7 1.4"/>
<path d="M56.8 71.2C57.0 72.9 57.8 81.5 58.7 84.6C59.5 87.8 62.4 93.7 63.5 96.2C64.6 98.7 68.1 102.4 67.3 104.8C66.6 107.3 59.3 113.5 57.7 115.4C56.2 117.3 55.6 119.2 54.8 120.0C54.1 120.9 53.0 120.2 51.9 122.4C50.9 124.6 47.3 134.2 46.2 137.8C45.1 141.4 43.4 147.4 43.3 151.2C43.2 155.1 44.2 163.8 45.2 168.6C46.2 173.4 49.4 184.7 51.0 189.7C52.5 194.8 56.3 205.1 57.7 209.0C59.2 212.8 62.3 219.3 62.5 220.5C62.8 221.7 59.2 215.6 59.8 218.3C60.3 221.0 66.7 235.8 67.3 241.9C67.8 248.1 65.3 262.9 64.0 267.7C62.8 272.5 58.0 276.8 57.6 280.6C57.2 284.4 59.6 294.6 60.8 297.8C62.0 301.0 65.8 306.4 67.3 306.4C68.7 306.4 72.1 301.6 72.6 297.8C73.2 294.0 71.0 281.1 71.6 276.3C72.1 271.5 75.2 264.0 76.9 259.1C78.7 254.3 83.8 242.5 85.5 237.6C87.3 232.8 90.8 223.9 90.9 220.4C91.0 217.0 87.1 211.0 86.6 209.7" stroke="#4358d4" stroke-width="2.0" opacity="0.77" stroke-dasharray="4 1.1 8 1.5 2.5 1"/>
<path d="M57.7 107.7C58.7 107.0 63.7 102.9 65.4 102.0C67.1 101.0 70.5 100.3 71.2 100.0" stroke="#4358d4" stroke-width="1.5" opacity="0.60" stroke-dasharray="6 1.4 3.5 1 5 1.2"/>
<path d="M58.7 84.6C58.1 86.1 55.2 93.3 53.9 96.2C52.5 99.1 48.8 106.3 48.1 107.7" stroke="#7d8be0" stroke-width="1.5" opacity="0.52" stroke-dasharray="5 1.3 3 0.9 7 1.4"/>
<path d="M101.0 77.0C101.8 78.2 106.5 84.9 107.7 86.6C108.9 88.3 111.0 88.7 110.6 90.4C110.3 92.1 106.4 97.4 104.8 100.0C103.3 102.7 99.3 109.1 98.1 111.6C96.9 114.1 95.6 119.2 95.2 120.0C94.9 120.9 94.6 117.8 95.2 118.5C95.8 119.3 99.0 123.8 100.0 126.2C101.1 128.6 103.3 133.7 103.9 137.8C104.5 141.9 105.3 154.1 104.8 158.9C104.4 163.8 101.6 171.9 100.0 176.3C98.5 180.6 94.3 189.7 92.3 193.6C90.4 197.4 86.3 204.8 84.6 207.0C83.0 209.3 80.4 211.8 78.9 211.8C77.3 211.8 73.2 209.3 72.1 207.0C71.1 204.8 70.3 198.9 70.2 193.6C70.1 188.3 71.1 169.0 71.2 164.7C71.3 160.4 71.2 159.7 71.2 158.9" stroke="#4358d4" stroke-width="2.0" opacity="0.77" stroke-dasharray="4 1.1 8 1.5 2.5 1"/>
<path d="M120.2 74.1C121.1 75.1 125.2 81.5 127.0 82.7C128.8 83.9 132.5 84.2 134.7 83.7C136.8 83.2 142.1 80.9 144.3 78.9C146.5 76.8 150.7 70.0 152.0 67.3C153.3 64.7 154.1 59.5 154.9 57.7C155.6 55.9 157.1 52.4 157.8 52.9C158.4 53.4 160.1 59.3 160.1 61.6C160.1 63.8 157.1 69.4 157.8 71.2C158.4 73.0 163.5 75.0 165.4 76.0C167.4 77.0 171.7 77.9 173.1 78.9C174.6 79.8 176.5 83.1 177.0 83.7" stroke="#4358d4" stroke-width="1.9" opacity="0.77" stroke-dasharray="6 1.4 3.5 1 5 1.2"/>
<path d="M110.6 90.4C111.7 91.0 116.8 94.0 119.3 95.2C121.8 96.4 128.2 99.9 130.8 100.0C133.5 100.2 137.8 97.9 140.4 96.2C143.1 94.5 149.1 88.5 152.0 86.6C154.9 84.6 161.4 81.3 163.5 80.8C165.7 80.3 168.6 82.5 169.3 82.7" stroke="#4358d4" stroke-width="1.9" opacity="0.77" stroke-dasharray="5 1.3 3 0.9 7 1.4"/>
<path d="M152.0 67.3C152.2 66.1 153.3 59.3 153.9 57.7C154.5 56.2 156.4 55.2 156.8 54.8" stroke="#6f7ee0" stroke-width="1.5" opacity="0.60" stroke-dasharray="4 1.1 8 1.5 2.5 1"/>
<path d="M161.6 67.3 173.1 59.6" stroke="#e6a0d8" stroke-width="1.4" opacity="0.43" stroke-dasharray="6 1.4 3.5 1 5 1.2"/>
<path d="M165.4 84.6C165.8 84.0 167.3 80.3 168.3 79.8C169.4 79.4 173.4 80.7 174.1 80.8" stroke="#4358d4" stroke-width="1.5" opacity="0.60" stroke-dasharray="5 1.3 3 0.9 7 1.4"/>
<path d="M78.9 80.8C79.6 82.0 83.0 89.0 84.6 90.4C86.3 91.9 90.4 92.7 92.3 92.3C94.3 92.0 98.8 89.0 100.0 87.5C101.2 86.1 101.7 81.6 102.0 80.8" stroke="#4358d4" stroke-width="1.8" opacity="0.73" stroke-dasharray="4 1.1 8 1.5 2.5 1"/>
<path d="M65.4 77.0C66.1 77.2 69.7 78.6 71.2 78.9C72.6 79.1 75.3 79.6 77.0 78.9C78.6 78.2 83.7 73.8 84.6 73.1" stroke="#9a8fe0" stroke-width="1.5" opacity="0.52" stroke-dasharray="6 1.4 3.5 1 5 1.2"/>
<path d="M63.5 94.3 73.1 90.4" stroke="#7d8be0" stroke-width="1.5" opacity="0.52" stroke-dasharray="5 1.3 3 0.9 7 1.4"/>
<path d="M92.3 66.4 94.3 73.1" stroke="#6fb5e8" stroke-width="1.6" opacity="0.60" stroke-dasharray="4 1.1 8 1.5 2.5 1"/>
<path d="M99.1 74.1 101.0 77.9" stroke="#3040c0" stroke-width="2.4" opacity="0.77" stroke-dasharray="6 1.4 3.5 1 5 1.2"/>
<path d="M84.6 100.0C85.6 100.5 90.9 102.4 92.3 103.9C93.8 105.3 95.7 110.6 96.2 111.6" stroke="#7d8be0" stroke-width="1.5" opacity="0.52" stroke-dasharray="5 1.3 3 0.9 7 1.4"/>
<path d="M77.0 98.1C77.0 100.9 77.0 117.7 77.0 120.0C77.0 122.4 77.0 117.0 77.0 116.6" stroke="#8fd8c8" stroke-width="1.5" opacity="0.52" stroke-dasharray="4 1.1 8 1.5 2.5 1"/>
<path d="M72.1 100.0 82.7 100.0" stroke="#8fd8c8" stroke-width="1.4" opacity="0.43" stroke-dasharray="6 1.4 3.5 1 5 1.2"/>
<path d="M73.1 125.3 80.8 125.9" stroke="#e080d0" stroke-width="1.5" opacity="0.52" stroke-dasharray="5 1.3 3 0.9 7 1.4"/>
<path d="M56.8 135.9C57.6 136.2 60.0 137.9 63.5 138.7C67.0 139.6 79.6 142.5 84.6 142.6C89.7 142.7 101.5 140.1 103.9 139.7" stroke="#4358d4" stroke-width="1.8" opacity="0.77" stroke-dasharray="4 1.1 8 1.5 2.5 1"/>
<path d="M56.8 135.9C57.7 137.5 62.6 146.4 64.4 149.3C66.3 152.2 69.4 158.5 71.2 158.9C73.0 159.4 77.2 155.2 78.9 153.2C80.6 151.1 83.9 143.9 84.6 142.6" stroke="#4358d4" stroke-width="1.9" opacity="0.77" stroke-dasharray="6 1.4 3.5 1 5 1.2"/>
<path d="M73.1 142.0 84.6 142.8" stroke="#e080d0" stroke-width="1.5" opacity="0.52" stroke-dasharray="5 1.3 3 0.9 7 1.4"/>
<path d="M71.2 164.7 70.2 193.6" stroke="#d8c0b0" stroke-width="1.4" opacity="0.43" stroke-dasharray="4 1.1 8 1.5 2.5 1"/>
<path d="M61.6 160.9 62.5 187.8" stroke="#a0e0f0" stroke-width="1.4" opacity="0.34" stroke-dasharray="6 1.4 3.5 1 5 1.2"/>
<path d="M85.5 209.7C86.1 212.1 90.4 224.2 89.8 229.0C89.3 233.9 83.2 243.5 81.2 248.4C79.2 253.2 75.1 264.2 73.7 267.7C72.4 271.2 70.9 275.2 70.5 276.3" stroke="#4358d4" stroke-width="1.8" opacity="0.77" stroke-dasharray="5 1.3 3 0.9 7 1.4"/>
<path d="M67.3 241.9C69.0 244.6 78.1 260.2 81.2 263.4C84.3 266.6 90.0 264.8 92.0 267.7C94.0 270.7 97.6 282.9 97.3 287.0C97.1 291.2 91.6 300.2 89.8 301.0C88.1 301.8 84.1 297.1 83.4 293.5C82.7 289.9 84.2 277.4 84.5 272.0C84.7 266.6 85.4 253.2 85.5 250.5" stroke="#4358d4" stroke-width="1.8" opacity="0.77" stroke-dasharray="4 1.1 8 1.5 2.5 1"/>
<path d="M85.5 207.6C84.5 208.1 78.8 212.9 76.9 211.9C75.1 210.8 71.3 200.6 70.5 199.0" stroke="#4358d4" stroke-width="1.8" opacity="0.77" stroke-dasharray="6 1.4 3.5 1 5 1.2"/>
<path d="M64.0 267.7 61.9 284.9" stroke="#7d8be0" stroke-width="1.5" opacity="0.52" stroke-dasharray="5 1.3 3 0.9 7 1.4"/>
</g>
</svg></body></html>
